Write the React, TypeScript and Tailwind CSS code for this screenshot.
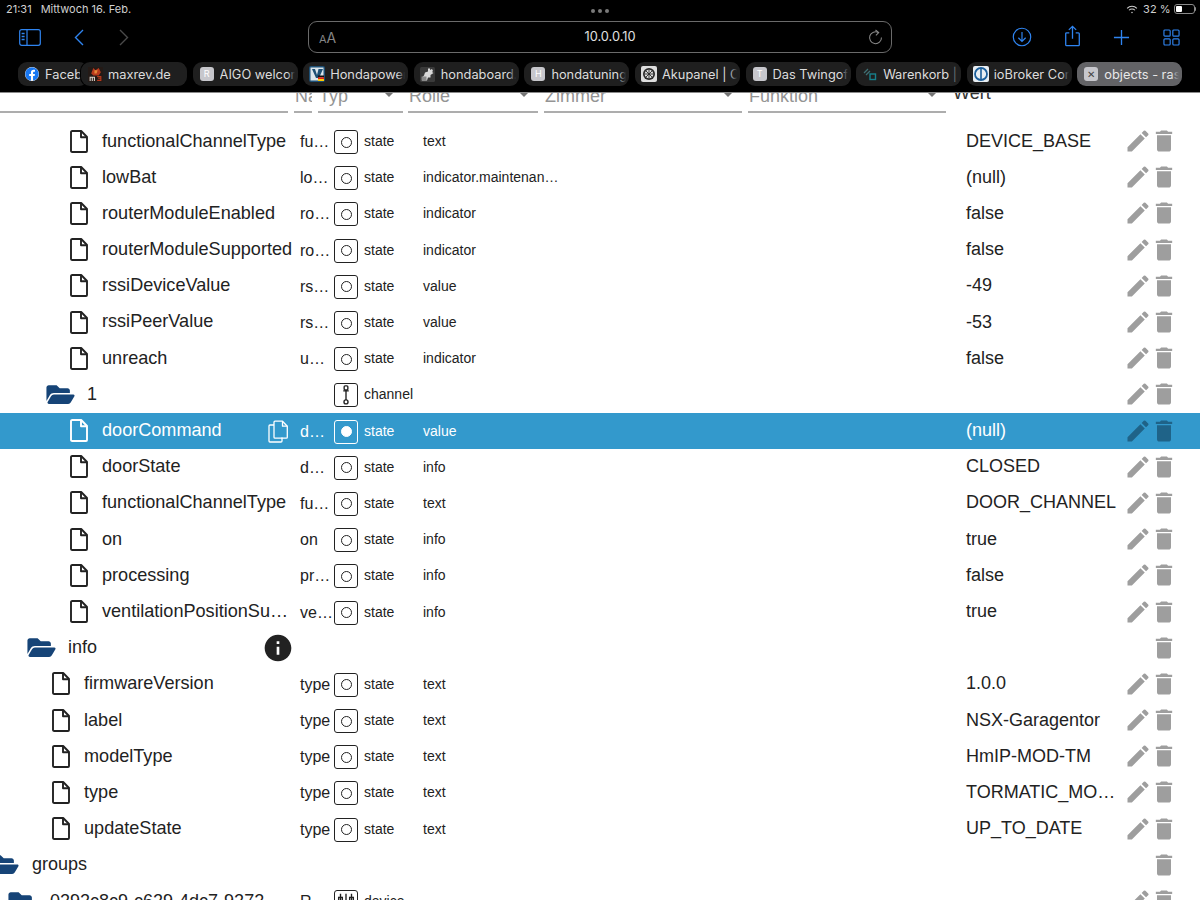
import React from "react";
import { FaFolderOpen, FaFacebook } from "react-icons/fa";
import { MdEdit, MdDelete, MdInfo } from "react-icons/md";

const FileIcon = ({ className }: { className?: string }) => (
  <svg viewBox="0 0 18 23" className={className} fill="none" stroke="currentColor" strokeWidth="1.9" strokeLinejoin="round">
    <path d="M2.2 1h9l5.8 6v14a1 1 0 0 1-1 1H2.2a1.2 1.2 0 0 1-1.2-1V2a1.2 1.2 0 0 1 1.2-1z" />
    <path d="M11 1v6.2h6" />
  </svg>
);

const CopyIcon = ({ className }: { className?: string }) => (
  <svg viewBox="0 0 20 23" className={className} fill="none" stroke="currentColor" strokeWidth="1.3" strokeLinejoin="round">
    <path d="M7 1.2h7.5l4.8 5v11a1 1 0 0 1-1 1H7a1 1 0 0 1-1-1v-15a1 1 0 0 1 1-1z" />
    <path d="M14.5 1.2v5h4.8" />
    <path d="M6 5H2a1 1 0 0 0-1 1v15a1 1 0 0 0 1 1h11a1 1 0 0 0 1-1v-3.5" />
  </svg>
);

const TypeBox = ({ kind, selected }: { kind: "state" | "channel" | "device"; selected?: boolean }) => (
  <div className={`mt-[2px] flex h-[24px] w-[24px] shrink-0 items-center justify-center rounded-[3px] border-[1.3px] ${selected ? "border-white text-white" : "border-[#222] text-[#222]"}`}>
    {kind === "state" && (
      <div className={`h-[11px] w-[11px] rounded-full border-[1.3px] ${selected ? "border-white bg-white" : "border-[#222]"}`} />
    )}
    {kind === "channel" && (
      <svg viewBox="0 0 24 24" className="h-[22px] w-[22px]" fill="none" stroke="currentColor" strokeWidth="1.5">
        <rect x="10" y="2" width="4" height="4.5" rx="1" />
        <path d="M9 7.5h6M12 6.5v11" />
        <circle cx="12" cy="19.5" r="2.2" />
      </svg>
    )}
    {kind === "device" && (
      <svg viewBox="0 0 24 24" className="h-[22px] w-[22px]" fill="none" stroke="currentColor" strokeWidth="1.5">
        <path d="M6 3v18M12 3v18M18 3v18" />
        <rect x="4" y="7" width="4" height="4" />
        <rect x="16" y="7" width="4" height="4" />
      </svg>
    )}
  </div>
);

type Row = {
  name: string;
  depth: 0 | 1 | 2 | 3;
  folder?: boolean;
  group?: boolean;
  short?: string;
  kind?: "state" | "channel" | "device";
  role?: string;
  value?: string;
  edit?: boolean;
  selected?: boolean;
  info?: boolean;
  typ?: string;
};

const rows: Row[] = [
  { name: "functionalChannelType", depth: 3, short: "fu…", kind: "state", role: "text", value: "DEVICE_BASE", edit: true },
  { name: "lowBat", depth: 3, short: "lo…", kind: "state", role: "indicator.maintenan…", value: "(null)", edit: true },
  { name: "routerModuleEnabled", depth: 3, short: "ro…", kind: "state", role: "indicator", value: "false", edit: true },
  { name: "routerModuleSupported", depth: 3, short: "ro…", kind: "state", role: "indicator", value: "false", edit: true },
  { name: "rssiDeviceValue", depth: 3, short: "rs…", kind: "state", role: "value", value: "-49", edit: true },
  { name: "rssiPeerValue", depth: 3, short: "rs…", kind: "state", role: "value", value: "-53", edit: true },
  { name: "unreach", depth: 3, short: "u…", kind: "state", role: "indicator", value: "false", edit: true },
  { name: "1", depth: 2, folder: true, kind: "channel", typ: "channel", edit: true },
  { name: "doorCommand", depth: 3, short: "d…", kind: "state", role: "value", value: "(null)", edit: true, selected: true },
  { name: "doorState", depth: 3, short: "d…", kind: "state", role: "info", value: "CLOSED", edit: true },
  { name: "functionalChannelType", depth: 3, short: "fu…", kind: "state", role: "text", value: "DOOR_CHANNEL", edit: true },
  { name: "on", depth: 3, short: "on", kind: "state", role: "info", value: "true", edit: true },
  { name: "processing", depth: 3, short: "pr…", kind: "state", role: "info", value: "false", edit: true },
  { name: "ventilationPositionSu…", depth: 3, short: "ve…", kind: "state", role: "info", value: "true", edit: true },
  { name: "info", depth: 1, folder: true, info: true },
  { name: "firmwareVersion", depth: 2, short: "type", kind: "state", role: "text", value: "1.0.0", edit: true },
  { name: "label", depth: 2, short: "type", kind: "state", role: "text", value: "NSX-Garagentor", edit: true },
  { name: "modelType", depth: 2, short: "type", kind: "state", role: "text", value: "HmIP-MOD-TM", edit: true },
  { name: "type", depth: 2, short: "type", kind: "state", role: "text", value: "TORMATIC_MO…", edit: true },
  { name: "updateState", depth: 2, short: "type", kind: "state", role: "text", value: "UP_TO_DATE", edit: true },
  { name: "groups", depth: 0, folder: true },
  { name: "0292c8c9-c629-4dc7-9272", depth: 1, folder: true, group: true, short: "R…", kind: "device", typ: "device", edit: true },
];

const fileIndent = ["pl-0", "pl-[52px]", "pl-[52px]", "pl-[70px]"];
const folderIndent = ["-ml-[10px]", "pl-[27px]", "pl-[46px]", "pl-[46px]"];

function TableRow({ r }: { r: Row }) {
  const sel = r.selected;
  const text = sel ? "text-white" : "text-[#222]";
  return (
    <div className={`flex h-[36.2px] shrink-0 items-center ${sel ? "bg-[#3399cc]" : "bg-white"} ${text}`}>
      <div className="relative flex h-full w-[300px] shrink-0 items-center overflow-hidden">
        {r.folder ? (
          <div className={`flex items-center ${r.group ? "pl-[8px]" : folderIndent[r.depth]}`}>
            <FaFolderOpen className="h-[25px] w-[29px] shrink-0 text-[#164477]" />
            <span className={`whitespace-nowrap text-[18px] ${r.depth === 0 || r.group ? "ml-[13px]" : "ml-[12px]"}`}>{r.name}</span>
          </div>
        ) : (
          <div className={`flex items-center ${fileIndent[r.depth]}`}>
            <FileIcon className={`h-[23px] w-[18px] shrink-0 ${sel ? "text-white" : "text-[#222]"}`} />
            <span className="ml-[14px] whitespace-nowrap text-[18.1px]">{r.name}</span>
          </div>
        )}
        {sel && <CopyIcon className="absolute left-[268px] top-[7px] h-[23px] w-[20px] text-white" />}
        {r.info && <MdInfo className="absolute left-[262px] top-[2.5px] h-[32px] w-[32px] text-[#222]" />}
      </div>
      <div className="w-[34px] shrink-0 whitespace-nowrap pt-[2px] text-[16px]">{r.short}</div>
      <div className="w-[30px] shrink-0">{r.kind && <TypeBox kind={r.kind} selected={sel} />}</div>
      <div className="w-[59px] shrink-0 pt-[1px] text-[14px]">{r.kind ? r.typ ?? "state" : ""}</div>
      <div className="w-[543px] shrink-0 whitespace-nowrap pt-[1px] text-[14px]">{r.role}</div>
      <div className="w-[158px] shrink-0 whitespace-nowrap text-[18px]">{r.value}</div>
      <div className="flex items-center">
        {r.edit ? (
          <MdEdit className={`h-[28px] w-[28px] shrink-0 ${sel ? "text-[#1f6388]" : "text-[#9e9e9e]"}`} />
        ) : (
          <div className="h-[28px] w-[28px] shrink-0" />
        )}
        {(r.edit || r.folder) && (
          <MdDelete className={`-ml-[2px] h-[28px] w-[28px] shrink-0 ${sel ? "text-[#1f6388]" : "text-[#9e9e9e]"}`} />
        )}
      </div>
    </div>
  );
}

const Caret = () => <div className="h-0 w-0 border-x-[6px] border-t-[6px] border-x-transparent border-t-[#757575]" />;

const Filter = ({ label, w, caret = true, cls = "" }: { label: string; w: string; caret?: boolean; cls?: string }) => (
  <div className={`flex h-[30px] shrink-0 flex-col ${w} ${cls}`}>
    <div className="flex h-[18px] items-start justify-between">
      <span className="-mt-[8px] min-w-0 overflow-hidden whitespace-nowrap pl-px text-[18px] leading-[22px] text-[#949494]">{label}</span>
      {caret && <div className="-mt-[2px] mr-[8px] shrink-0"><Caret /></div>}
    </div>
    <div className="h-[1.5px] bg-[#adadad]" />
  </div>
);

const Fav = ({ c, ch }: { c: string; ch: string }) => (
  <div className={`flex h-[14px] w-[14px] shrink-0 items-center justify-center rounded-[3px] text-[9px] text-white ${c}`}>{ch}</div>
);

const Tab = ({ icon, label, cls = "w-[105px]", active }: { icon: React.ReactNode; label: string; cls?: string; active?: boolean }) => (
  <div className={`relative flex h-[24px] shrink-0 items-center overflow-hidden rounded-[9px] pl-[7px] pr-[3px] ${active ? "bg-[#636366]" : "bg-[#1f1f1f]"} ${cls}`}>
    <span className="flex w-[14px] shrink-0 items-center justify-center">{icon}</span>
    <span className={`ml-[6px] min-w-0 overflow-hidden whitespace-nowrap pt-[1px] text-[12.8px] ${active ? "text-[#e8e8e8]" : "text-[#dcdcdc]"}`}>{label}</span>
    <div className={`absolute right-[3px] top-0 h-full w-[8px] bg-gradient-to-r from-transparent ${active ? "to-[#636366]" : "to-[#1f1f1f]"}`} />
  </div>
);

const Blue = "text-[#2f84f0]";

export default function App() {
  return (
    <div className="flex h-[900px] w-[1200px] flex-col overflow-hidden bg-white font-['Liberation_Sans',Arial,sans-serif]">
      {/* Safari chrome */}
      <div className="z-10 flex h-[93px] shrink-0 flex-col border-b border-[#8a8a8a] bg-black font-['Inter','Liberation_Sans',sans-serif]">
        <div className="flex h-[18px] items-center justify-between pl-[6px] pr-[4px] text-[11px] text-[#d0d0d0]">
          <div className="flex gap-[9px]"><span>21:31</span><span>Mittwoch 16. Feb.</span></div>
          <div className="flex items-center gap-[3px]">
            <svg viewBox="0 0 16 12" className="h-[9px] w-[12px]" fill="none" stroke="#cfcfcf" strokeWidth="1.4">
              <path d="M1.5 4.5a9 9 0 0 1 13 0M4 7a5.5 5.5 0 0 1 8 0" />
              <circle cx="8" cy="10" r="1" fill="#cfcfcf" stroke="none" />
            </svg>
            <span className="ml-[2px] text-[11px]">32 %</span>
            <div className="flex h-[10px] w-[21px] items-center rounded-[3px] border border-[#8a8a8a] p-px"><div className="h-full w-[6px] rounded-[1px] bg-white" /></div>
            <div className="-ml-[3px] h-[4px] w-[1.5px] rounded-r bg-[#8a8a8a]" />
          </div>
        </div>
        <div className="relative flex h-[38px] items-center">
          <div className="flex w-[308px] shrink-0 items-center">
            <svg viewBox="0 0 22 17" className={`ml-[19px] h-[17px] w-[22px] ${Blue}`} fill="none" stroke="currentColor" strokeWidth="1.2">
              <rect x="0.7" y="0.7" width="20.6" height="15.6" rx="2" />
              <path d="M8 0.7v15.6" />
              <path d="M2.6 4.5h3M2.6 7.5h3M2.6 10.5h3" strokeWidth="1.4" />
            </svg>
            <svg viewBox="0 0 10 17" className={`ml-[33px] h-[17px] w-[10px] ${Blue}`} fill="none" stroke="currentColor" strokeWidth="1.4"><path d="M9 1 1.5 8.5 9 16" /></svg>
            <svg viewBox="0 0 10 17" className="ml-[35px] h-[17px] w-[10px] text-[#4a4a4a]" fill="none" stroke="currentColor" strokeWidth="1.4"><path d="m1 1 7.5 7.5L1 16" /></svg>
          </div>
          <div className="relative flex h-[32px] w-[584px] shrink-0 items-center justify-center rounded-[9px] border border-[#6a6a6a]">
            <span className="absolute left-[10px] flex items-baseline text-[#858585]"><span className="text-[11px]">A</span><span className="text-[14px]">A</span></span>
            <span className="ml-[20px] text-[12.8px] text-[#e0e0e0]">10.0.0.10</span>
            <svg viewBox="0 0 20 20" className="absolute right-[7px] h-[17px] w-[17px] text-[#8a8a8a]" fill="none" stroke="currentColor" strokeWidth="1.2">
              <path d="M13.5 4.2A7 7 0 1 0 17 10" />
              <path d="M10 1.2 13.8 4.2 10.5 7.5" />
            </svg>
          </div>
          <div className={`flex items-center ${Blue}`}>
            <svg viewBox="0 0 22 22" className="ml-[120px] h-[20px] w-[20px]" fill="none" stroke="currentColor" strokeWidth="1.3">
              <circle cx="11" cy="11" r="9.6" />
              <path d="M11 5.5v10M7 11.8l4 4 4-4" />
            </svg>
            <svg viewBox="0 0 18 24" className="ml-[32px] -mt-[3px] h-[22px] w-[17px]" fill="none" stroke="currentColor" strokeWidth="1.4">
              <path d="M5.5 8.5H2.6a1 1 0 0 0-1 1v12a1 1 0 0 0 1 1h12.8a1 1 0 0 0 1-1v-12a1 1 0 0 0-1-1h-2.9" />
              <path d="M9 15V1.5M5 5.3 9 1.5l4 3.8" />
            </svg>
            <svg viewBox="0 0 18 18" className="ml-[32px] h-[17px] w-[17px]" fill="none" stroke="currentColor" strokeWidth="1.4"><path d="M9 1v16M1 9h16" /></svg>
            <svg viewBox="0 0 18 18" className="ml-[33px] h-[17px] w-[17px]" fill="none" stroke="currentColor" strokeWidth="1.2">
              <rect x="1" y="1" width="6.6" height="6.6" rx="1" />
              <rect x="10.4" y="1" width="6.6" height="6.6" rx="1" />
              <rect x="1" y="10.4" width="6.6" height="6.6" rx="1" />
              <rect x="10.4" y="10.4" width="6.6" height="6.6" rx="1" />
            </svg>
          </div>
          <div className="absolute -top-[9px] left-[591px] flex gap-[3px]">
            <div className="h-[4px] w-[4px] rounded-full bg-[#7a7a7a]" /><div className="h-[4px] w-[4px] rounded-full bg-[#7a7a7a]" /><div className="h-[4px] w-[4px] rounded-full bg-[#7a7a7a]" />
          </div>
        </div>
        <div className="mt-[6px] flex gap-[5.6px] pl-[18px]">
          <Tab cls="w-[70px]" icon={<FaFacebook className="h-[14px] w-[14px] rounded-full bg-white text-[#1877f2]" />} label="Facebook" />
          <Tab
            cls="z-10 -ml-[12.6px] w-[106px] shadow-[0_0_0_1px_#000]"
            icon={
              <svg viewBox="0 0 14 14" className="h-[15px] w-[15px] shrink-0">
                <rect width="14" height="14" fill="#241a16" />
                <path d="M3 6 5 1l2 2 3-2 2 4-2 3H5z" fill="#b8391c" />
                <path d="M6 3h3L8 6H6z" fill="#e58a3a" />
                <path d="M1.5 9h5v4h-1v-3h-1v3h-1v-3h-1v3h-1z" fill="#d8d2ca" />
                <path d="M8.500 8.500h4v4.500h-4v-1h3v-1h-2v-1h2v-.5h-3z" fill="#b8391c" />
              </svg>
            }
            label="maxrev.de"
          />
          <Tab icon={<Fav c="bg-[#c7c7cc]" ch="R" />} label="AIGO welcome" />
          <Tab
            icon={
              <svg viewBox="0 0 16 16" className="h-[16px] w-[16px] shrink-0">
                <rect width="16" height="16" rx="2" fill="#1d4f74" />
                <rect x="1.500" y="1.500" width="13" height="13" fill="#dce6ec" />
                <path d="M3 3h3l2 6 1.500-6H14L10 12H7z" fill="#1d4f74" />
                <rect x="9" y="9.500" width="6" height="1.800" fill="#111" />
                <rect x="9" y="11.300" width="6" height="1.800" fill="#d21" />
                <rect x="9" y="13.100" width="6" height="1.900" fill="#fc0" />
              </svg>
            }
            label="Hondapower"
          />
          <Tab
            icon={
              <svg viewBox="0 0 15 15" className="h-[15px] w-[15px] shrink-0">
                <rect width="15" height="15" rx="1.500" fill="#3a3a3a" />
                <path d="M8 1.500h2v1.500l2-1 1 2-1 1 1.500 1-3 2v2.500H8l-1 3H2v-3l2-2 1-3 3-1z" fill="#dadada" />
                <path d="M1.500 9.500h5v4h-5z" fill="#8a8a8a" />
              </svg>
            }
            label="hondaboard.de"
          />
          <Tab icon={<Fav c="bg-[#c7c7cc]" ch="H" />} label="hondatuning" />
          <Tab
            icon={
              <svg viewBox="0 0 16 16" className="h-[16px] w-[16px] shrink-0">
                <rect width="16" height="16" rx="2" fill="#dedede" />
                <circle cx="8" cy="8" r="6" fill="#2a2a2a" />
                <circle cx="8" cy="8" r="4.300" fill="#dedede" />
                <path d="M8 3.700v8.600M3.700 8h8.600M5 5l6 6M11 5l-6 6" stroke="#2a2a2a" strokeWidth="0.900" />
              </svg>
            }
            label="Akupanel | C"
          />
          <Tab icon={<Fav c="bg-[#c7c7cc]" ch="T" />} label="Das Twingof" />
          <Tab
            icon={
              <svg viewBox="0 0 14 14" className="h-[14px] w-[14px]" fill="none">
                <path d="M1 6 5 2M3 8l4-4" stroke="#3f6f73" strokeWidth="1.300" />
                <rect x="7" y="7" width="5.500" height="5.500" stroke="#17808c" strokeWidth="1.400" />
              </svg>
            }
            label="Warenkorb |"
          />
          <Tab
            icon={
              <svg viewBox="0 0 16 16" className="h-[16px] w-[16px] shrink-0">
                <rect width="16" height="16" rx="2" fill="#e8eef3" />
                <circle cx="8" cy="8" r="6" fill="none" stroke="#1c5f9b" strokeWidth="1.800" />
                <rect x="7.200" y="3" width="1.600" height="10" fill="#1c5f9b" />
              </svg>
            }
            label="ioBroker Cor"
          />
          <Tab
            active
            icon={<div className="flex h-[14px] w-[14px] items-center justify-center rounded-[3px] bg-[#c7c7cc] text-[10px] leading-none text-[#444]">✕</div>}
            label="objects - ras"
          />
        </div>
      </div>

      {/* Filter header */}
      <div className="flex h-[30px] shrink-0 items-start bg-white">
        <Filter label="" w="w-[288px]" caret={false} />
        <Filter label="Name" w="w-[18px]" caret={false} cls="ml-[6px]" />
        <Filter label="Typ" w="w-[85px]" cls="ml-[6px]" />
        <Filter label="Rolle" w="w-[130px]" cls="ml-[5px]" />
        <Filter label="Zimmer" w="w-[198px]" cls="ml-[6px]" />
        <Filter label="Funktion" w="w-[198px]" cls="ml-[6px]" />
        <span className="-mt-[13px] ml-[7px] text-[18px] text-[#333]">Wert</span>
      </div>

      {/* Rows */}
      <div className="flex flex-1 flex-col overflow-hidden">
        {rows.map((r, i) => (
          <TableRow key={i} r={r} />
        ))}
      </div>
    </div>
  );
}
